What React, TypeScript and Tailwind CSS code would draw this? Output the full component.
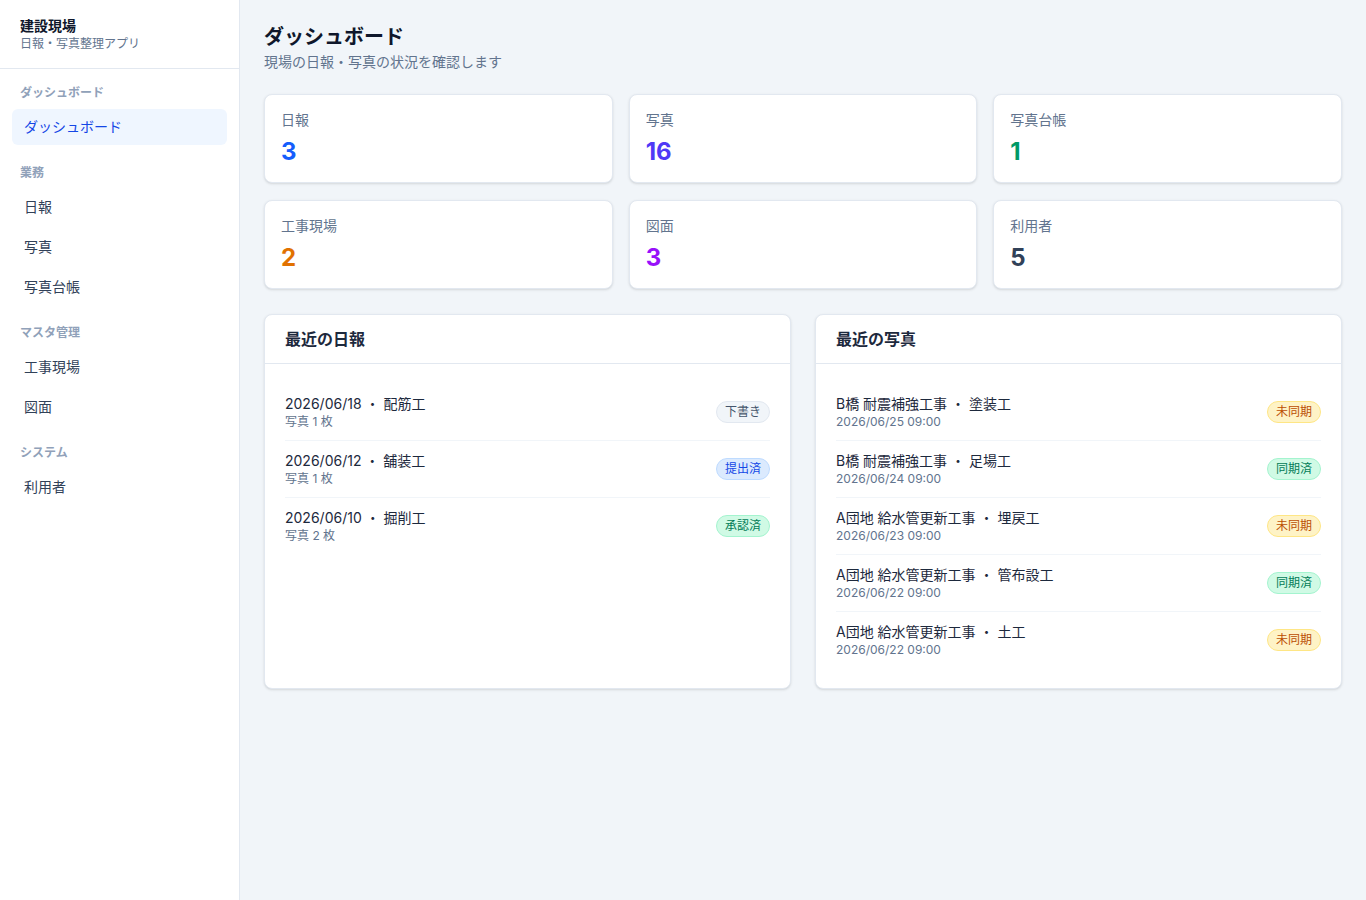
import React from "react";

type Stat = { label: string; value: number; color: string };

const stats: Stat[] = [
  { label: "日報", value: 3, color: "text-blue-600" },
  { label: "写真", value: 16, color: "text-indigo-600" },
  { label: "写真台帳", value: 1, color: "text-emerald-600" },
  { label: "工事現場", value: 2, color: "text-amber-600" },
  { label: "図面", value: 3, color: "text-purple-600" },
  { label: "利用者", value: 5, color: "text-slate-700" },
];

const badgeStyles: Record<string, string> = {
  下書き: "bg-slate-100 text-slate-600 border-slate-200",
  提出済: "bg-blue-100 text-blue-700 border-blue-200",
  承認済: "bg-emerald-100 text-emerald-700 border-emerald-200",
  未同期: "bg-amber-100 text-amber-700 border-amber-200",
  同期済: "bg-emerald-100 text-emerald-700 border-emerald-200",
};

const reports = [
  { title: "2026/06/18 ・ 配筋工", sub: "写真 1 枚", status: "下書き" },
  { title: "2026/06/12 ・ 舗装工", sub: "写真 1 枚", status: "提出済" },
  { title: "2026/06/10 ・ 掘削工", sub: "写真 2 枚", status: "承認済" },
];

const photos = [
  { title: "B橋 耐震補強工事 ・ 塗装工", sub: "2026/06/25 09:00", status: "未同期" },
  { title: "B橋 耐震補強工事 ・ 足場工", sub: "2026/06/24 09:00", status: "同期済" },
  { title: "A団地 給水管更新工事 ・ 埋戻工", sub: "2026/06/23 09:00", status: "未同期" },
  { title: "A団地 給水管更新工事 ・ 管布設工", sub: "2026/06/22 09:00", status: "同期済" },
  { title: "A団地 給水管更新工事 ・ 土工", sub: "2026/06/22 09:00", status: "未同期" },
];

const navGroups = [
  { label: "ダッシュボード", items: ["ダッシュボード"] },
  { label: "業務", items: ["日報", "写真", "写真台帳"] },
  { label: "マスタ管理", items: ["工事現場", "図面"] },
  { label: "システム", items: ["利用者"] },
];

const Badge = ({ status }: { status: string }) => (
  <span
    className={`inline-flex h-[22px] items-center rounded-full border px-2 text-xs ${badgeStyles[status]}`}
  >
    {status}
  </span>
);

const ListPanel = ({
  title,
  rows,
}: {
  title: string;
  rows: { title: string; sub: string; status: string }[];
}) => (
  <div className="flex flex-col rounded-lg border border-slate-200 bg-white shadow-sm">
    <div className="border-b border-slate-200 px-5 py-3">
      <h2 className="text-base font-bold leading-6 text-slate-800">{title}</h2>
    </div>
    <ul className="p-5">
      {rows.map((r, i) => (
        <li
          key={i}
          className={`flex items-center justify-between py-2.5 ${
            i < rows.length - 1 ? "border-b border-slate-100" : ""
          }`}
        >
          <div>
            <div className="text-sm leading-5 text-slate-800">{r.title}</div>
            <div className="text-xs leading-4 text-slate-500">{r.sub}</div>
          </div>
          <Badge status={r.status} />
        </li>
      ))}
    </ul>
  </div>
);

const App = () => {
  return (
    <div
      className="flex min-h-screen w-full bg-slate-100"
      style={{ fontFamily: '"Inter", "Noto Sans CJK JP", sans-serif' }}
    >
      {/* Sidebar */}
      <aside className="w-[240px] shrink-0 border-r border-slate-200 bg-white">
        <div className="border-b border-slate-200 px-5 pb-4 pt-4">
          <div className="text-sm font-bold leading-5 text-slate-900">建設現場</div>
          <div className="text-xs leading-4 text-slate-500">日報・写真整理アプリ</div>
        </div>
        <nav className="px-3 pt-4">
          {navGroups.map((g, gi) => (
            <div key={g.label} className={gi > 0 ? "mt-5" : ""}>
              <div className="mb-2 px-2 text-xs font-semibold leading-4 text-slate-400">
                {g.label}
              </div>
              <div className="flex flex-col gap-1">
                {g.items.map((item) => {
                  const active = gi === 0;
                  return (
                    <div
                      key={item}
                      className={`flex h-9 items-center rounded-md px-3 text-sm ${
                        active ? "bg-blue-50 text-blue-700" : "text-slate-700"
                      }`}
                    >
                      {item}
                    </div>
                  );
                })}
              </div>
            </div>
          ))}
        </nav>
      </aside>

      {/* Main */}
      <main className="flex-1 px-6 pt-[23px]">
        <h1 className="text-xl font-bold leading-7 text-slate-900">ダッシュボード</h1>
        <p className="mt-px text-sm leading-5 text-slate-500">現場の日報・写真の状況を確認します</p>

        <div className="mt-[22px] grid grid-cols-3 gap-x-4 gap-y-[17px]">
          {stats.map((s) => (
            <div
              key={s.label}
              className="rounded-lg border border-slate-200 bg-white px-4 pb-[14px] pt-[15px] shadow-sm"
            >
              <div className="text-sm leading-5 text-slate-500">{s.label}</div>
              <div className={`mt-1.5 text-2xl font-bold leading-8 ${s.color}`}>{s.value}</div>
            </div>
          ))}
        </div>

        <div className="mt-[25px] grid grid-cols-2 gap-6">
          <ListPanel title="最近の日報" rows={reports} />
          <ListPanel title="最近の写真" rows={photos} />
        </div>
      </main>
    </div>
  );
};

export default App;
